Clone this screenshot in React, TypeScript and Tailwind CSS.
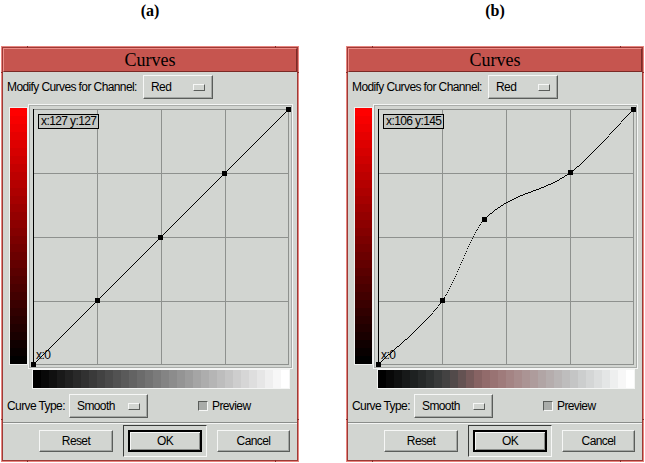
import React from "react";

type Pt = [number, number];

const linear: Pt[] = [[0, 0], [64, 64], [127, 127], [191, 191], [255, 255]];
const bent: Pt[] = [[0, 0], [64, 64], [106, 145], [192, 192], [255, 255]];

// cardinal spline in function form, like the old curves tool
const curveAt = (pts: Pt[], x: number) => {
  let i = 0;
  while (i < pts.length - 2 && x > pts[i + 1][0]) i++;
  const [x0, y0] = pts[i];
  const [x1, y1] = pts[i + 1];
  const slope = (k: number) => {
    const a = pts[Math.max(k - 1, 0)];
    const b = pts[Math.min(k + 1, pts.length - 1)];
    return (b[1] - a[1]) / (b[0] - a[0]);
  };
  const h = x1 - x0;
  const t = (x - x0) / h;
  const m0 = slope(i) * h;
  const m1 = slope(i + 1) * h;
  const y =
    (2 * t ** 3 - 3 * t ** 2 + 1) * y0 +
    (t ** 3 - 2 * t ** 2 + t) * m0 +
    (-2 * t ** 3 + 3 * t ** 2) * y1 +
    (t ** 3 - t ** 2) * m1;
  return Math.max(0, Math.min(255, y));
};

const steps = Array.from({ length: 32 }, (_, i) => Math.round((i * 255) / 31));

const raised =
  "border border-t-[#f6f7f6] border-l-[#f6f7f6] border-b-[#5a5d5a] border-r-[#5a5d5a] shadow-[inset_-1px_-1px_0_#a3a6a3]";

const OptionButton = ({ label, className }: { label: string; className: string }) => (
  <div className={`h-[24px] flex items-center justify-between pl-[7px] pr-[7px] ${raised} ${className}`}>
    <span>{label}</span>
    <span className="w-[12px] h-[7px] border border-t-[#f6f7f6] border-l-[#f6f7f6] border-b-[#5a5d5a] border-r-[#5a5d5a]" />
  </div>
);

const Chart = ({ pts, tip }: { pts: Pt[]; tip: string }) => {
  const grid = [69, 133, 197];
  return (
    <div className="relative w-[265px] h-[265px]">
      <svg width="265" height="265" shapeRendering="crispEdges">
        <rect x="0.5" y="0.5" width="264" height="264" fill="none" stroke="#f4f5f4" />
        <rect x="1.5" y="1.5" width="262" height="262" fill="none" stroke="#a9aca9" />
        <rect x="5.5" y="5.5" width="255" height="255" fill="none" stroke="#8e918e" />
        {grid.map((g) => (
          <g key={g}>
            <line x1={g + 0.5} y1="5" x2={g + 0.5} y2="261" stroke="#8e918e" />
            <line x1="5" y1={g + 0.5} x2="261" y2={g + 0.5} stroke="#8e918e" />
          </g>
        ))}
        <line x1="5.5" y1="5" x2="5.5" y2="261" stroke="#000" />
        {Array.from({ length: 256 }, (_, x) => (
          <rect key={x} x={5 + x} y={260 - Math.round(curveAt(pts, x))} width="1" height="1" fill="#000" />
        ))}
        {pts.map(([x, y]) => (
          <rect key={x} x={5 + x - 2} y={260 - y - 2} width="5" height="5" fill="#000" />
        ))}
      </svg>
      <div className="absolute left-[10px] top-[10px] h-[15px] px-[2px] border border-black bg-[#c4c7c3] leading-[13px]">
        {tip}
      </div>
      <div className="absolute left-[8px] top-[245px] leading-[13px]">x:0</div>
    </div>
  );
};

// little resize-handle notches of the window manager frame
const Notches = () => (
  <>
    <span className="absolute left-[25px] top-[-1px] w-[1px] h-[2px] bg-[#8a2e2a]" />
    <span className="absolute left-[273px] top-[-1px] w-[1px] h-[2px] bg-[#8a2e2a]" />
    <span className="absolute left-[25px] bottom-[-1px] w-[1px] h-[2px] bg-[#8a2e2a]" />
    <span className="absolute left-[273px] bottom-[-1px] w-[1px] h-[2px] bg-[#8a2e2a]" />
    <span className="absolute left-[-1px] top-[25px] w-[2px] h-[1px] bg-[#8a2e2a]" />
    <span className="absolute right-[-1px] top-[25px] w-[2px] h-[1px] bg-[#8a2e2a]" />
    <span className="absolute left-[-1px] top-[372px] w-[2px] h-[1px] bg-[#8a2e2a]" />
    <span className="absolute right-[-1px] top-[372px] w-[2px] h-[1px] bg-[#8a2e2a]" />
  </>
);

const CurvesDialog = ({ pts, tip }: { pts: Pt[]; tip: string }) => (
  <div className="relative h-[416px] border border-[#e8847e]">
    <div className="h-full border border-[#9c3a36] flex flex-col bg-[#d2d5d1] font-['Liberation_Sans',sans-serif] text-[12px] tracking-[-0.6px] text-black">
      <div className="h-[24px] shrink-0 bg-[#c6554f] border border-t-[#ec8e88] border-l-[#ec8e88] border-b-[#7a2a26] border-r-[#7a2a26] flex items-center justify-center font-['Liberation_Serif',serif] text-[18px] tracking-normal">
        Curves
      </div>

      <div className="mt-[3px] h-[24px] flex items-center pl-[4px]">
        <div className="w-[136px]">Modify Curves for Channel:</div>
        <OptionButton label="Red" className="w-[70px]" />
      </div>

      <div className="mt-[5px] flex pl-[6px] h-[265px]">
        <div className="mt-[3px] w-[19px] h-[258px] border border-[#eef0ee]">
          <svg width="17" height="256" shapeRendering="crispEdges">
            {steps.map((v, i) => (
              <rect key={i} x="0" y={248 - i * 8} width="17" height="8" fill={`rgb(${v},0,0)`} />
            ))}
          </svg>
        </div>
        <Chart pts={pts} tip={tip} />
      </div>

      <div className="ml-[29px] w-[258px] h-[20px] border border-[#f4f5f4]">
        <svg width="256" height="18" shapeRendering="crispEdges">
          {steps.map((v, i) => (
            <rect key={i} x={i * 8} y="0" width="8" height="18" fill={`rgb(${Math.round(curveAt(pts, v))},${v},${v})`} />
          ))}
        </svg>
      </div>

      <div className="mt-[5px] h-[24px] flex items-center pl-[4px]">
        <div className="w-[62px]">Curve Type:</div>
        <OptionButton label="Smooth" className="w-[79px]" />
        <span className="ml-[50px] w-[10px] h-[10px] bg-[#a9aca9] border border-t-[#5a5d5a] border-l-[#5a5d5a] border-b-[#f6f7f6] border-r-[#f6f7f6]" />
        <span className="ml-[4px]">Preview</span>
      </div>

      <div className="mt-[4px] h-[2px] border-t border-t-[#8a8d8a] border-b border-b-[#f4f5f4]" />

      <div className="mt-[1px] h-[32px] flex items-center pl-[36px]">
        <div className={`w-[74px] h-[22px] flex items-center justify-center ${raised}`}>Reset</div>
        <div className="ml-[10px] w-[84px] h-[32px] flex items-center justify-center border border-t-[#3a3c3a] border-l-[#3a3c3a] border-b-[#f6f7f6] border-r-[#f6f7f6]">
          <div className="w-[74px] h-[22px] flex items-center justify-center border-2 border-black shadow-[inset_1px_1px_0_#f6f7f6,inset_-1px_-1px_0_#8a8d8a]">
            OK
          </div>
        </div>
        <div className={`ml-[10px] w-[73px] h-[22px] flex items-center justify-center ${raised}`}>Cancel</div>
      </div>
    </div>
    <Notches />
  </div>
);

export default function App() {
  return (
    <div className="w-[645px] h-[463px] bg-white overflow-hidden flex gap-[47px] pl-[1px]">
      <div className="w-[298px] flex flex-col">
        <div className="h-[46px] pt-[2px] text-center font-['Liberation_Serif',serif] font-bold text-[16px] leading-[18px]">(a)</div>
        <CurvesDialog pts={linear} tip="x:127 y:127" />
      </div>
      <div className="w-[298px] flex flex-col">
        <div className="h-[46px] pt-[2px] text-center font-['Liberation_Serif',serif] font-bold text-[16px] leading-[18px]">(b)</div>
        <CurvesDialog pts={bent} tip="x:106 y:145" />
      </div>
    </div>
  );
}
